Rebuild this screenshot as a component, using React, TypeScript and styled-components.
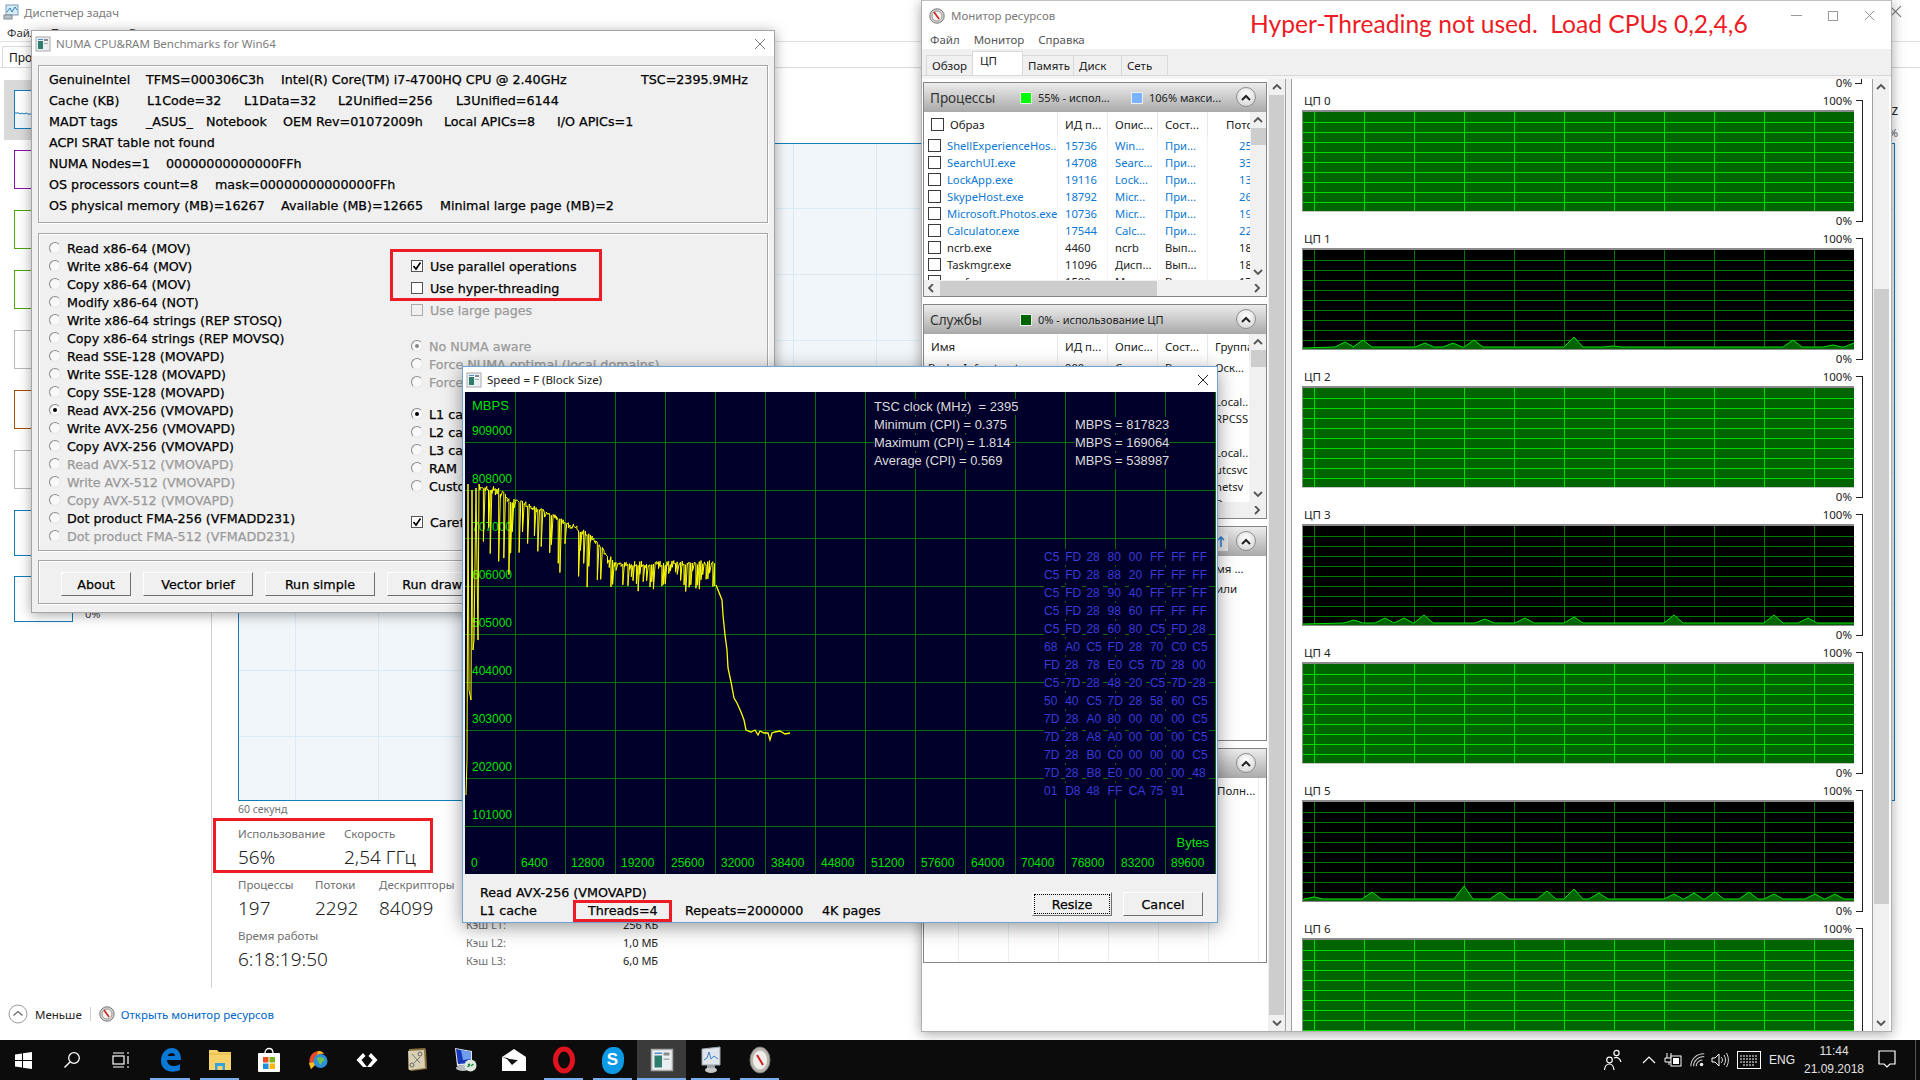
import React from "react";
import styled, { createGlobalStyle } from "styled-components";

const UI = `"Noto Sans", "Open Sans", Arial, sans-serif`;
const OLD = `"DejaVu Sans", "Liberation Sans", sans-serif`;
const NARROW = `"Liberation Sans", Arial, sans-serif`;

const Global = createGlobalStyle`
  html, body { margin: 0; padding: 0; background: #fff; overflow: hidden; }
  * { box-sizing: border-box; }
`;

const Desktop = styled.div`
  position: relative; width: 1920px; height: 1080px; overflow: hidden; background: #fff; font-family: ${UI};
`;

/* ---------- windows ---------- */
const Win = styled.div<{ $x: number; $y: number; $w: number; $h: number }>`
  position: absolute; left: ${(p) => p.$x}px; top: ${(p) => p.$y}px; width: ${(p) => p.$w}px; height: ${(p) => p.$h}px;
  display: flex; flex-direction: column; overflow: hidden;
`;
const RedBox = styled.div<{ $x: number; $y: number; $w: number; $h: number }>`
  position: absolute; left: ${(p) => p.$x}px; top: ${(p) => p.$y}px; width: ${(p) => p.$w}px; height: ${(p) => p.$h}px;
  border: 3px solid #ed1c24; pointer-events: none;
`;
const Headline = styled.div`
  position: absolute; left: 1250px; top: 7px; font: 400 24.6px/34px Lato, sans-serif; color: #ed1c24; white-space: pre;
`;

/* ---------- task manager ---------- */
const TmWin = styled(Win)` background: #fff; `;
const TmTitle = styled.div`
  height: 24px; display: flex; align-items: center; gap: 5px; padding-left: 3px; font-size: 11.5px; color: #7a7a7a; flex: none; position: relative;
`;
const TmClose = styled.div` margin-left: auto; margin-right: 18px; color: #777; font-size: 16px; line-height: 16px; `;
const TmMenu = styled.div`
  height: 18px; flex: none; display: flex; gap: 14px; padding-left: 7px; font-size: 11.5px; color: #333; border-bottom: 1px solid #e0e0e0; align-items: center;
`;
const TmTabs = styled.div`
  height: 26px; flex: none; padding: 0 0 0 2px; font-size: 12px; color: #111; border-bottom: 1px solid #d9d9d9; display: flex; align-items: flex-end;
`;
const TmTab = styled.div`
  height: 21px; padding: 0 9px 0 6px; line-height: 21px; border: 1px solid #d9d9d9; border-bottom: 0; background: #fff;
`;
const TmBody = styled.div` flex: 1; display: flex; min-height: 0; `;
const TmLeft = styled.div` width: 212px; flex: none; padding-top: 12px; border-right: 1px solid #d0d0d0; `;
const Thumb = styled.div<{ $sel?: boolean; $gap?: number }>`
  margin-left: 4px; padding: 10px 0 ${(p) => p.$gap ?? 11}px 10px;
  background: ${(p) => (p.$sel ? "#d9d9d9" : "transparent")}; display: flex; gap: 12px; align-items: flex-end;
`;
const ThumbBox = styled.div<{ $c: string; $tall?: boolean }>`
  width: 59px; height: ${(p) => (p.$tall ? 46 : 39)}px; border: 1px solid ${(p) => p.$c}; background: #fff; flex: none; display: flex; flex-direction: column; justify-content: flex-end;
`;
const ThumbPct = styled.div` font-size: 11px; line-height: 12px; color: #444; transform: translateY(-2px); `;
const TmRight = styled.div` flex: 1; padding: 0 25px 0 26px; min-width: 0; display: flex; flex-direction: column; `;
const TmHead = styled.div` height: 75px; flex: none; margin-right: -3px; display: flex; flex-direction: column; justify-content: flex-end; align-items: flex-end; font-size: 11.5px; line-height: 14px; color: #555; gap: 9px; padding-bottom: 3px; `;
const TmHeadCpu = styled.div` font-size: 14px; color: #222; `;
const BigChart = styled.div`
  height: 658px; flex: none; border: 1px solid #117dbb; background-color: #f1f6fa;
  background-image: linear-gradient(to right, #d9eaf4 1px, transparent 1px), linear-gradient(to bottom, #d9eaf4 1px, transparent 1px);
  background-size: 83px 66px; background-position: 56px 64px;
`;
const Caption = styled.div` font-size: 10.5px; line-height: 17px; color: #707070; height: 18px; margin-bottom: 7px; `;
const StatsRow = styled.div` display: flex; align-items: flex-end; `;
const StatsLeft = styled.div` width: 228px; display: flex; flex-direction: column; gap: 5px; flex: none; `;
const StatLine = styled.div` display: flex; `;
const Stat = styled.div<{ $w: number }>` width: ${(p) => p.$w}px; flex: none; `;
const StatLabel = styled.div` font-size: 11.5px; line-height: 16px; color: #707070; white-space: nowrap; `;
const StatValue = styled.div` font-size: 19px; font-weight: 300; line-height: 30px; color: #222; white-space: nowrap; `;
const CacheBlock = styled.div` padding-bottom: 5px; `;
const CacheRow = styled.div` display: flex; height: 18px; align-items: center; font-size: 11px; `;
const CacheKey = styled.div` width: 157px; color: #707070; `;
const CacheVal = styled.div` color: #222; `;
const TmFoot = styled.div` height: 52px; flex: none; display: flex; align-items: center; padding-left: 8px; font-size: 11.5px; color: #222; `;
const FootLess = styled.span` margin-left: 7px; `;
const FootSep = styled.div` width: 1px; height: 14px; background: #cfcfcf; margin: 0 8px; `;
const FootLink = styled.span` margin-left: 6px; color: #0066cc; `;

/* ---------- NUMA window ---------- */
const NumaWin = styled(Win)` background: #f0f0f0; border: 1px solid #a5a5a5; box-shadow: 0 2px 12px rgba(0,0,0,.35); font-family: ${OLD}; font-size: 12.7px; color: #000; -webkit-text-stroke: 0.25px; `;
const WinTitle = styled.div`
  height: 25px; flex: none; background: #fff; display: flex; align-items: center; padding-left: 3px; gap: 5px; font: 400 11.5px ${UI}; color: #7d7d7d; -webkit-text-stroke: 0;
`;
const WinTitleDark = styled(WinTitle)` color: #222; `;
const WinX = styled.div` margin-left: auto; margin-right: 6px; width: 16px; height: 16px; display: flex; align-items: center; justify-content: center; `;
const Group = styled.div<{ $h: number; $mt: number }>`
  height: ${(p) => p.$h}px; margin: ${(p) => p.$mt}px 6px 0; border: 1px solid #a8a8a8; box-shadow: inset 1px 1px 0 #fff, 1px 1px 0 #fff; flex: none;
`;
const InfoBox = styled(Group)` padding: 3px 0 0 10px; `;
const InfoLine = styled.div` height: 21px; display: flex; align-items: center; white-space: pre; `;
const Cell = styled.span<{ $w?: number }>` ${(p) => (p.$w ? `width:${p.$w}px;flex:none;` : "")} `;
const OptionsBox = styled(Group)` padding: 5px 0 0 10px; display: flex; `;
const OptLeft = styled.div` width: 362px; flex: none; `;
const OptRow = styled.div<{ $off?: boolean; $h?: number; $mt?: number }>`
  height: ${(p) => p.$h ?? 18}px; margin-top: ${(p) => p.$mt ?? 0}px; display: flex; align-items: center; gap: 6px; white-space: nowrap; color: ${(p) => (p.$off ? "#9a9a9a" : "#000")};
`;
const OptRight = styled.div` padding: 18px 0 0 0; margin-top: -2px; `;
const Radio = styled.span<{ $on?: boolean; $off?: boolean }>`
  width: 12px; height: 12px; flex: none; border-radius: 50%; border: 1px solid; border-color: #8a8a8a #e6e6e6 #e6e6e6 #8a8a8a; background: #f8f8f8; display: flex; align-items: center; justify-content: center;
  &::after { content: ""; width: 4px; height: 4px; border-radius: 50%; background: ${(p) => (p.$on ? (p.$off ? "#888" : "#000") : "transparent")}; }
`;
const Check = styled.span<{ $off?: boolean }>`
  width: 12px; height: 12px; flex: none; border: 1px solid ${(p) => (p.$off ? "#aaa" : "#555")}; background: ${(p) => (p.$off ? "#f0f0f0" : "#fff")}; display: flex; margin-right: 1px;
`;
const ButtonsBox = styled(Group)` padding: 11px 0 0 22px; display: flex; gap: 12px; `;
const OldButton = styled.div<{ $w: number; $focus?: boolean }>`
  width: ${(p) => p.$w}px; height: 24px; flex: none; display: flex; align-items: center; justify-content: center; background: #f0f0f0; color: #000;
  border: 1px solid; border-color: #fff #6e6e6e #6e6e6e #fff; white-space: nowrap;
  outline: ${(p) => (p.$focus ? "1px dotted #000" : "none")}; outline-offset: -3px;
`;

/* ---------- Speed window ---------- */
const SpeedWin = styled(Win)` background: #f0f0f0; border: 1px solid #6ea3d4; box-shadow: 0 4px 18px rgba(0,0,0,.4); font-family: ${OLD}; font-size: 12.7px; -webkit-text-stroke: 0.25px; `;
const Canvas = styled.div`
  position: relative; width: 751px; height: 482px; margin-left: 2px; flex: none; background: #00002a; overflow: hidden; font-family: ${NARROW}; font-size: 12px; line-height: 16px; -webkit-text-stroke: 0;
`;
const Layer = styled.svg` position: absolute; left: 0; top: 0; display: block; `;
const AxisY = styled.div` position: absolute; left: 7px; top: 6px; color: #00e000; display: flex; flex-direction: column; `;
const AxisMbps = styled.div` height: 16px; margin-bottom: -7px; font-size: 13px; `;
const AxisYRow = styled.div` height: 48px; padding-top: 16px; `;
const AxisX = styled.div` position: absolute; left: 0; bottom: 3px; display: grid; grid-template-columns: repeat(15, 50px); color: #00e000; `;
const AxisXCell = styled.div` padding-left: 6px; `;
const Bytes = styled.div` position: absolute; right: 7px; top: 443px; color: #00e000; font-size: 13px; `;
const StatsText = styled.div<{ $x: number; $y: number }>`
  position: absolute; left: ${(p) => p.$x}px; top: ${(p) => p.$y}px; color: #dcdcdc; display: flex; flex-direction: column; gap: 2px; white-space: pre; align-items: flex-start;
`;
const StatsLine = styled.div` background: #00002a; font-size: 12.9px; `;
const Hex = styled.div` position: absolute; left: 579px; top: 157px; display: flex; flex-direction: column; gap: 2px; color: #3a3ad8; `;
const HexRow = styled.div` display: grid; grid-template-columns: repeat(8, 21.2px); `;
const HexCell = styled.span` background: #00002a; width: 17px; height: 16px; `;
const SpeedFoot = styled.div` flex: 1; display: flex; padding: 9px 14px 0 17px; `;
const SpeedInfo = styled.div` display: flex; flex-direction: column; `;
const SpeedLine = styled.div` display: flex; height: 18px; align-items: center; white-space: nowrap; `;
const SpeedBtns = styled.div` margin-left: auto; margin-top: 9px; display: flex; gap: 11px; `;

/* ---------- Resource monitor ---------- */
const ResWin = styled(Win)` background: #fff; border: 1px solid #b0b0b0; border-top: 1px solid #c0c0c0; box-shadow: 0 2px 12px rgba(0,0,0,.35); `;
const ResTitle = styled.div` height: 29px; flex: none; display: flex; align-items: center; gap: 6px; padding-left: 7px; font-size: 11.5px; color: #7a7a7a; `;
const Ctrls = styled.div` margin-left: auto; display: flex; align-items: center; gap: 26px; padding-right: 16px; `;
const ResMenu = styled.div` height: 19px; flex: none; display: flex; gap: 14px; padding-left: 8px; font-size: 11.5px; color: #555; align-items: center; `;
const ResTabs = styled.div` height: 27px; flex: none; background: #f0f0f0; display: flex; align-items: flex-end; padding-left: 4px; border-bottom: 1px solid #d8d8d8; `;
const ResTab = styled.div<{ $w: number; $on?: boolean }>`
  width: ${(p) => p.$w}px; height: ${(p) => (p.$on ? 24 : 20)}px; flex: none; background: ${(p) => (p.$on ? "#fff" : "#f0f0f0")}; border: 1px solid #d9d9d9; border-bottom: 0;
  margin-right: -1px; font-size: 11.5px; color: #222; display: flex; align-items: ${(p) => (p.$on ? "flex-start" : "center")}; padding-left: ${(p) => (p.$on ? 7 : 5)}px; line-height: 18px;
`;
const ResBody = styled.div` flex: 1; display: flex; min-height: 0; border-top: 3px solid #f4f4f4; `;
const ResLeft = styled.div` width: 347px; flex: none; padding: 3px 0 0 1px; display: flex; flex-direction: column; gap: 7px; `;
const Panel = styled.div` width: 344px; height: 215px; border: 1px solid #858585; flex: none; display: flex; flex-direction: column; background: #fff; overflow: hidden; `;
const PanelHead = styled.div`
  height: 29px; flex: none; display: flex; align-items: center; padding-left: 6px; background: linear-gradient(#ececec, #a9a9a9); position: relative; font-size: 12px; color: #222; white-space: nowrap;
`;
const PanelName = styled.div` width: 90px; flex: none; font-size: 13.5px; color: #333; `;
const Meter = styled.span<{ $c: string }>` width: 12px; height: 12px; flex: none; border: 1px solid #eee; background: ${(p) => p.$c}; margin-right: 6px; `;
const MeterText = styled.span<{ $w?: number }>` ${(p) => (p.$w ? `width:${p.$w}px;flex:none;` : "")} font-size: 11px; `;
const Collapse = styled.div`
  position: absolute; right: 10px; top: 4px; width: 20px; height: 20px; border-radius: 50%; border: 1px solid #8d8d8d; background: radial-gradient(circle at 50% 35%, #fff, #cfcfcf); display: flex; align-items: center; justify-content: center;
`;
const HeadAction = styled.div` margin-left: auto; margin-right: 38px; width: 22px; height: 18px; background: #e6e6e6; display: flex; align-items: center; justify-content: flex-end; padding-right: 3px; `;
const PanelTable = styled.div` flex: 1; display: flex; min-height: 0; `;
const TableMain = styled.div` width: 326px; flex: none; overflow: hidden; `;
const TableGrid = styled.div` display: grid; grid-template-columns: 134px 50px 50px 50px 42px; font-size: 11.2px; line-height: 17px; white-space: nowrap; color: #222; `;
const HeadRow = styled(TableGrid)` height: 25px; align-items: center; font-size: 11.5px; `;
const HeadCell = styled.div<{ $r?: boolean }>` padding-left: 7px; height: 25px; line-height: 25px; border-right: 1px solid #e8e8e8; overflow: hidden; display: flex; align-items: center; gap: 6px; ${(p) => (p.$r ? "padding-left:18px;border:0;" : "")} `;
const BodyCell = styled.div<{ $blue?: boolean; $r?: boolean }>` height: 17px; padding-left: 7px; color: ${(p) => (p.$blue ? "#0a78d4" : "#222")}; overflow: hidden; border-right: 1px solid #f4f4f4; display: flex; align-items: center; gap: 6px; ${(p) => (p.$r ? "padding-left:31px;border:0;" : "")} `;
const NameCell = styled(BodyCell)` padding-left: 4px; `;
const Box12 = styled.span` width: 13px; height: 13px; border: 1px solid #3a3a3a; flex: none; background: #fff; `;
const Rows = styled.div<{ $h: number }>` height: ${(p) => p.$h}px; overflow: hidden; `;
const VBar = styled.div` width: 16px; flex: none; background: #f0f0f0; display: flex; flex-direction: column; align-items: center; `;
const ThumbV = styled.div<{ $h: number; $mt?: number }>` width: 15px; height: ${(p) => p.$h}px; background: #cdcdcd; margin-top: ${(p) => p.$mt ?? 0}px; `;
const Arrow = styled.div` height: 16px; flex: none; display: flex; align-items: center; justify-content: center; width: 16px; `;
const Spacer = styled.div` flex: 1; `;
const HBar = styled.div` height: 16px; flex: none; background: #f0f0f0; display: flex; align-items: center; `;
const ThumbH = styled.div` width: 217px; height: 15px; background: #cdcdcd; `;
const LowerGrid = styled.div` flex: 1; display: flex; padding-left: 276px; font-size: 11.5px; color: #222; overflow: hidden; position: relative; white-space: nowrap; `;
const LowerCol = styled.div` flex: 1; padding-top: 4px; display: flex; flex-direction: column; gap: 3px; line-height: 17px; padding-left: 16px; `;
const FaintLines = styled.div`
  flex: 1; align-self: stretch; background-image: linear-gradient(to right, #e6eef4 1px, transparent 1px); background-size: 50px 100%; background-position: 134px 0;
`;
const LowerFour = styled.div` flex: 1; display: flex; flex-direction: column; font-size: 11.5px; color: #222; white-space: nowrap; line-height: 17px; padding-left: 293px; background-image: linear-gradient(to right, #e6eef4 1px, transparent 1px); background-size: 50px 100%; background-position: 134px 0; padding-top: 4px; gap: 5px; `;
const DriveLetter = styled.div` margin-left: -9px; `;
const MidBar = styled(VBar)` width: 17px; height: 100%; background: #f0f0f0; margin-left: -1px; `;
const ThumbTall = styled.div` width: 15px; flex: 1; background: #cdcdcd; `;
const Gutter = styled.div` width: 6px; flex: none; background: #f0f0f0; border-left: 1px solid #a0a0a0; `;
const ResRight = styled.div` width: 582px; flex: none; border-left: 1px solid #a0a0a0; border-right: 1px solid #a0a0a0; padding-left: 10px; overflow: hidden; background: #fff; `;
const Tail = styled.div` height: 11px; display: flex; position: relative; `;
const TailText = styled.div` width: 550px; text-align: right; font-size: 11.5px; line-height: 14px; color: #222; margin-top: -3px; `;
const TailTick = styled.div` width: 7px; height: 5px; margin-left: 3px; border-bottom: 1px solid #222; border-right: 1px solid #222; `;
const CpuBlock = styled.div` display: grid; grid-template-columns: 552px 12px; grid-template-rows: 20px 102px 16px; `;
const CpuHead = styled.div` display: flex; justify-content: space-between; align-items: center; font-size: 11.5px; color: #222; padding: 2px 2px 0 2px; height: 20px; line-height: 14px; `;
const CpuFoot = styled.div` text-align: right; font-size: 11.5px; line-height: 14px; height: 16px; padding: 2px 2px 0 0; color: #222; `;
const Bracket = styled.div` grid-column: 2; grid-row: 1 / 4; margin: 10px 0 0 2px; height: 122px; width: 7px; border: 1px solid #222; border-left: 0; `;
const CpuSvg = styled.svg` display: block; grid-column: 1; `;

/* ---------- taskbar ---------- */
const Taskbar = styled.div`
  position: absolute; left: 0; top: 1040px; width: 1920px; height: 40px; background: #0c0c0c; display: flex; align-items: stretch;
`;
const TbIcons = styled.div` display: flex; `;
const TbSlot = styled.div<{ $w: number; $on?: boolean; $run?: boolean }>`
  width: ${(p) => p.$w}px; flex: none; position: relative; display: flex; align-items: center; justify-content: center; background: ${(p) => (p.$on ? "#3b3b3b" : "transparent")};
  ${(p) => (p.$run ? `&::after{content:"";position:absolute;left:${p.$on ? 0 : 5}px;right:${p.$on ? 0 : 5}px;bottom:0;height:2px;background:#76aef0;}` : "")}
`;
const Tray = styled.div` margin-left: auto; display: flex; align-items: center; color: #fff; `;
const TrayIcon = styled.div<{ $w: number }>` width: ${(p) => p.$w}px; flex: none; display: flex; justify-content: center; align-items: center; `;
const TrayLang = styled.div` width: 36px; flex: none; text-align: center; font: 400 12px ${NARROW}; color: #e8e8e8; `;
const Clock = styled.div` width: 68px; flex: none; text-align: center; font: 400 12px/18px ${NARROW}; color: #e0e0e0; `;
const DeskEdge = styled.div` width: 5px; height: 100%; border-left: 1px solid #555; flex: none; margin-left: 9px; `;

/* ---------- icons ---------- */
const XIcon = ({ c = "#777", s = 12 }: { c?: string; s?: number }) => (
  <svg width={s} height={s} viewBox="0 0 12 12"><path d="M1 1 L11 11 M11 1 L1 11" stroke={c} strokeWidth="1" fill="none" /></svg>
);
const Chev = ({ dir }: { dir: "u" | "d" | "l" | "r" }) => {
  const d = { u: "M1 6 L5 2 L9 6", d: "M1 2 L5 6 L9 2", l: "M6 0 L2 4 L6 8", r: "M2 0 L6 4 L2 8" }[dir];
  return <svg width="10" height="9" viewBox="0 0 10 9"><path d={d} stroke="#555" strokeWidth="1.8" fill="none" /></svg>;
};
const ChevBold = () => <svg width="12" height="9" viewBox="0 0 12 9"><path d="M2 7 L6 3 L10 7" stroke="#222" strokeWidth="2" fill="none" /></svg>;
const Tick = () => <svg width="10" height="10" viewBox="0 0 10 10"><path d="M1.5 5 L4 8 L8.5 1.5" stroke="#000" strokeWidth="1.7" fill="none" /></svg>;
const UpBlue = () => <svg width="8" height="12" viewBox="0 0 8 12"><path d="M4 1 V11 M1 4 L4 1 L7 4" stroke="#2a7fd0" strokeWidth="1.5" fill="none" /></svg>;
const NumaIcon = ({ s = 16 }: { s?: number }) => (
  <svg width={s} height={s} viewBox="0 0 16 16"><rect x="1" y="1" width="14" height="14" fill="#eceff2" stroke="#a8a8a8" /><rect x="3" y="5" width="5" height="8" fill="#2f7d6e" /><rect x="9" y="3" width="4" height="2" fill="#888" /><rect x="9" y="7" width="4" height="1" fill="#aaa" /><rect x="3" y="3" width="5" height="1" fill="#4a8fd0" /></svg>
);
const CompassIcon = ({ s = 16 }: { s?: number }) => (
  <svg width={s} height={s} viewBox="0 0 16 16"><circle cx="8" cy="8" r="7.2" fill="#d8d4d0" stroke="#777" /><circle cx="8" cy="8" r="5" fill="#f6f4f0" stroke="#999" /><path d="M5 4 L10 11" stroke="#d02020" strokeWidth="1.6" /></svg>
);
const TmIcon = () => (
  <svg width="16" height="16" viewBox="0 0 16 16"><rect x="3" y="1" width="12" height="10" fill="#d8ecf8" stroke="#7a9ab8" /><path d="M4 8 L7 4 L9 8 L12 3 L14 6" stroke="#2a80b8" fill="none" /><rect x="1" y="11" width="8" height="4" fill="#b8c0c8" stroke="#808890" /></svg>
);
const CpuThumbLine = () => <svg width="57" height="19" viewBox="0 0 57 19"><rect y="5" width="57" height="14" fill="#f1f6fa" /><path d="M0 4 H4 L5 5 L7 4 L9 5 L11 4 L13 5 H57" stroke="#117dbb" fill="none" /></svg>;
const WinLogo = () => <svg width="17" height="17" viewBox="0 0 17 17"><path fill="#fff" d="M0 2.4 L7 1.4 V8 H0 Z M8 1.2 L17 0 V8 H8 Z M0 9 H7 V15.6 L0 14.6 Z M8 9 H17 V17 L8 15.8 Z" /></svg>;
const SearchI = () => <svg width="18" height="18" viewBox="0 0 18 18"><circle cx="11" cy="7" r="5.3" stroke="#fff" strokeWidth="1.3" fill="none" /><path d="M7 11 L1.5 16.5" stroke="#fff" strokeWidth="1.5" /></svg>;
const TaskV = () => <svg width="18" height="18" viewBox="0 0 18 18"><g stroke="#fff" strokeWidth="1.2" fill="none"><rect x="1" y="5" width="11" height="8" /><path d="M1 2 H12 M1 16 H12 M15 2 H17 M15 16 H17 M16 5 V13" /></g></svg>;
const EdgeI = () => <svg width="24" height="26" viewBox="0 0 24 26"><path d="M3 14 C3 5 9 1 14 1 C20 1 23 6 23 13 L9 13 C9 19 17 21 22 17 L22 23 C14 27 3 24 3 14 Z M9.5 9 H17 C17 5 11 5 9.5 9 Z" fill="#0a78d7" fillRule="evenodd" /></svg>;
const FolderI = () => <svg width="24" height="24" viewBox="0 0 24 24"><path d="M1 2 H9 L11 4 H23 V22 H1 Z" fill="#f5d26a" /><path d="M1 6 H23" stroke="#e3b341" /><path d="M7 15 H17 V22 H14.5 V18 H9.5 V22 H7 Z" fill="#35a2e0" /></svg>;
const StoreI = () => <svg width="24" height="26" viewBox="0 0 24 26"><path d="M8 6 C8 0 16 0 16 6" stroke="#fff" strokeWidth="1.3" fill="none" /><rect x="1" y="6" width="22" height="19" fill="#fff" rx="1" /><rect x="6" y="10" width="5.5" height="5.5" fill="#e8501f" /><rect x="12.5" y="10" width="5.5" height="5.5" fill="#7cb518" /><rect x="6" y="16.5" width="5.5" height="5.5" fill="#1e90e0" /><rect x="12.5" y="16.5" width="5.5" height="5.5" fill="#fbb80f" /></svg>;
const WheelI = () => (
  <svg width="20" height="20" viewBox="0 0 20 20">
    <path d="M2 15 C0 9 3 2 10 1 C13 1 15 2 16 4 C11 3 7 6 7 12 L9 13 L3 19 L1 13 Z" fill="#e84a2a" />
    <path d="M10 1 C13 1 15 2 16 4 C13 3 11 4 9 6 Z" fill="#f6c21a" />
    <path d="M1 13 L3 19 L9 13 L7 12 Z" fill="#f2c21a" />
    <circle cx="12.5" cy="11" r="7" fill="#2f8fd8" />
    <path d="M9 8 C12 6 16 7 17 11 C14 10 14 14 12 15 C11 12 9 11 9 8 Z" fill="#6cc24a" />
  </svg>
);
const DiamondI = () => <svg width="24" height="16" viewBox="0 0 24 16"><path d="M8 1 L1.5 8 L8 15 H12 L6.5 8 L10.5 4 Z M16 1 L22.5 8 L16 15 H12 L17.5 8 L13.5 4 Z" fill="#fff" /></svg>;
const MapI = () => (
  <svg width="22" height="24" viewBox="0 0 22 24">
    <path d="M4 1 L20 0 L21 2 L22 21 L6 23 L3 21 Z" fill="#8a7440" />
    <path d="M3 3 L19 2 L20 20 L4 22 Z" fill="#d9d0b4" />
    <circle cx="15" cy="6" r="2" fill="none" stroke="#666" /><circle cx="7" cy="17" r="2" fill="none" stroke="#666" />
    <path d="M7 6 L15 15 M15 9 L9 15" stroke="#777" />
  </svg>
);
const NetI = () => (
  <svg width="24" height="26" viewBox="0 0 24 26">
    <path d="M2 1 L19 4 L19 17 L4 19 Z" fill="#dfe4ea" />
    <path d="M3 2 L18 5 L18 16 L5 17 Z" fill="#1538b8" /><path d="M8 3 L18 5 L18 12 L10 13 Z" fill="#6f9df0" />
    <ellipse cx="10" cy="21" rx="7" ry="3" fill="#b8bcc0" />
    <circle cx="17.5" cy="18.5" r="6" fill="#dfe9df" /><path d="M14.5 20 L17 18 M18 19 L20.5 17 M15 18 L17 17" stroke="#188a38" strokeWidth="1.4" />
  </svg>
);
const MailI = () => <svg width="24" height="24" viewBox="0 0 24 24"><path d="M0 9 L12 1 L24 9 V23 H0 Z" fill="#fff" /><path d="M0 9 L16 12 L10 17 L5 11 Z" fill="#111" /><path d="M5 9 L19 9 L18 12 L7 11 Z" fill="#fff" /></svg>;
const OperaI = () => <svg width="22" height="28" viewBox="0 0 22 28"><ellipse cx="11" cy="14" rx="8.5" ry="11" stroke="#e0131f" strokeWidth="5" fill="none" /></svg>;
const SkypeText = styled.span` font: 700 17px/24px ${NARROW}; color: #fff; `;
const SkypeBg = styled.div` width: 22px; height: 27px; border-radius: 50% 40% 50% 40%; background: #0d9be6; display: flex; align-items: center; justify-content: center; `;
const PerfI = () => <svg width="24" height="28" viewBox="0 0 24 28"><path d="M3 3 L21 1 V19 L3 19 Z" fill="#dfe5ea" stroke="#9aa4ac" /><path d="M5 14 L8 12 L10 6 L12 13 L15 10 L19 13" stroke="#3a80d0" fill="none" /><ellipse cx="12" cy="24" rx="6" ry="3" fill="#c8c8c8" /><rect x="8" y="19" width="8" height="3" fill="#a0a0a0" /></svg>;
const ResI = () => <svg width="22" height="28" viewBox="0 0 22 28"><ellipse cx="11" cy="14" rx="10" ry="13" fill="#b8b4ae" stroke="#7a7a7a" /><ellipse cx="11" cy="14" rx="7" ry="9.5" fill="#f0eeea" /><path d="M8 9 L14 19" stroke="#d02020" strokeWidth="2" /></svg>;
const PeopleI = () => <svg width="20" height="24" viewBox="0 0 20 24"><g stroke="#fff" strokeWidth="1.2" fill="none"><circle cx="6.5" cy="12" r="2.8" /><path d="M1.5 22 C2 17 5 16 6.5 16 C9 16 10.5 18 11 22" /><circle cx="13.5" cy="5" r="2.6" /><path d="M11 10 C14 8.5 17 10 18 14" /></g></svg>;
const CaretI = () => <svg width="14" height="10" viewBox="0 0 14 10"><path d="M1 8 L7 2 L13 8" stroke="#fff" strokeWidth="1.2" fill="none" /></svg>;
const BattI = () => <svg width="18" height="18" viewBox="0 0 18 18"><path d="M3 2 V7 M7 2 V7 M1 7 H9 V11 H1 Z M5 11 V14" stroke="#fff" fill="none" /><rect x="7" y="5" width="10" height="10" fill="#000" stroke="#fff" /><rect x="9" y="7" width="6" height="6" fill="#fff" /></svg>;
const WifiI = () => <svg width="16" height="18" viewBox="0 0 18 18"><g stroke="#ccc" strokeWidth="1.2" fill="none"><path d="M1 16 C1 8 7 2 16 2" /><path d="M4 16 C4 10 9 5 16 5" /><path d="M7 16 C7 12 10 9 14 9" /></g><circle cx="13" cy="14" r="2" fill="#eee" /></svg>;
const VolI = () => <svg width="18" height="18" viewBox="0 0 18 18"><path d="M1 7 H4 L8 3 V15 L4 11 H1 Z" stroke="#fff" fill="none" /><path d="M10 6 C12 8 12 10 10 12 M13 4 C15 7 15 11 13 14 M15.5 2 C18 7 18 11 15.5 16" stroke="#ddd" fill="none" /></svg>;
const KbdI = () => <svg width="24" height="18" viewBox="0 0 24 18"><rect x="0.5" y="0.5" width="23" height="17" stroke="#fff" fill="none" /><path d="M3 5 H21 M3 8 H21 M3 11 H21 M6 14 H18" stroke="#fff" strokeDasharray="2 1" /></svg>;
const NotifI = () => <svg width="18" height="20" viewBox="0 0 18 20"><path d="M1 1 H17 V14 H12 L9 17 L6 14 H1 Z" stroke="#fff" strokeWidth="1.2" fill="none" /></svg>;
const LessI = () => <svg width="20" height="20" viewBox="0 0 20 20"><circle cx="10" cy="10" r="9" stroke="#9a9a9a" fill="#fff" /><path d="M5.5 11.5 L10 7.5 L14.5 11.5" stroke="#666" strokeWidth="1.2" fill="none" /></svg>;

/* ---------- data ---------- */
const infoLines: [string, number?][][] = [
  [["GenuineIntel", 97], ["TFMS=000306C3h", 135], ["Intel(R) Core(TM) i7-4700HQ CPU @ 2.40GHz", 360], ["TSC=2395.9MHz"]],
  [["Cache (KB)", 98], ["L1Code=32", 97], ["L1Data=32", 94], ["L2Unified=256", 118], ["L3Unified=6144"]],
  [["MADT tags", 97], ["_ASUS_", 60], ["Notebook", 77], ["OEM Rev=01072009h", 161], ["Local APICs=8", 113], ["I/O APICs=1"]],
  [["ACPI SRAT table not found"]],
  [["NUMA Nodes=1", 117], ["00000000000000FFh"]],
  [["OS processors count=8", 166], ["mask=00000000000000FFh"]],
  [["OS physical memory (MB)=16267", 232], ["Available (MB)=12665", 159], ["Minimal large page (MB)=2"]],
];
const radios: [string, boolean?, boolean?][] = [
  ["Read x86-64 (MOV)"], ["Write x86-64 (MOV)"], ["Copy x86-64 (MOV)"], ["Modify x86-64 (NOT)"],
  ["Write x86-64 strings (REP STOSQ)"], ["Copy x86-64 strings (REP MOVSQ)"], ["Read SSE-128 (MOVAPD)"], ["Write SSE-128 (MOVAPD)"],
  ["Copy SSE-128 (MOVAPD)"], ["Read AVX-256 (VMOVAPD)", true], ["Write AVX-256 (VMOVAPD)"], ["Copy AVX-256 (VMOVAPD)"],
  ["Read AVX-512 (VMOVAPD)", false, true], ["Write AVX-512 (VMOVAPD)", false, true], ["Copy AVX-512 (VMOVAPD)", false, true],
  ["Dot product FMA-256 (VFMADD231)"], ["Dot product FMA-512 (VFMADD231)", false, true],
];
const hexRows = [
  "C5 FD 28 80 00 FF FF FF", "C5 FD 28 88 20 FF FF FF", "C5 FD 28 90 40 FF FF FF", "C5 FD 28 98 60 FF FF FF",
  "C5 FD 28 60 80 C5 FD 28", "68 A0 C5 FD 28 70 C0 C5", "FD 28 78 E0 C5 7D 28 00", "C5 7D 28 48 20 C5 7D 28",
  "50 40 C5 7D 28 58 60 C5", "7D 28 A0 80 00 00 00 C5", "7D 28 A8 A0 00 00 00 C5", "7D 28 B0 C0 00 00 00 C5",
  "7D 28 B8 E0 00 00 00 48", "01 D8 48 FF CA 75 91",
];
const procs = [
  ["ShellExperienceHos...", "15736", "Win...", "При...", "25", 1], ["SearchUI.exe", "14708", "Searc...", "При...", "33", 1],
  ["LockApp.exe", "19116", "Lock...", "При...", "13", 1], ["SkypeHost.exe", "18792", "Micr...", "При...", "26", 1],
  ["Microsoft.Photos.exe", "10736", "Micr...", "При...", "19", 1], ["Calculator.exe", "17544", "Calc...", "При...", "22", 1],
  ["ncrb.exe", "4460", "ncrb", "Вып...", "18", 0], ["Taskmgr.exe", "11096", "Дисп...", "Вып...", "18", 0],
  ["perfmon.exe", "1500", "Мон...", "Вып...", "17", 0],
] as const;

type Pk = [number, number];
const peaks: Record<number, Pk[]> = {
  1: [[43, 6], [61, 8], [123, 5], [151, 5], [172, 8], [272, 11], [311, 2], [491, 8], [531, 3], [552, 5]],
  3: [[52, 4], [83, 6], [102, 6], [122, 9], [183, 5], [223, 6], [272, 7], [372, 9], [472, 9], [506, 6]],
  5: [[12, 3], [70, 8], [162, 14], [198, 8], [245, 9], [272, 11], [297, 7], [372, 6], [392, 7], [413, 8], [447, 8], [472, 6], [513, 6], [533, 6]],
};
const idleLine = (pk: Pk[]) => {
  const pts: string[] = ["1,100"];
  pk.forEach(([x, h]) => { pts.push(`${x - 10},99`, `${x},${100 - h}`, `${x + 9},99`); });
  pts.push("552,99");
  return pts.join(" ");
};

const CpuChart = ({ i }: { i: number }) => {
  const loaded = i % 2 === 0;
  const line = idleLine(peaks[i] ?? []);
  return (
    <CpuSvg width={552} height={102} viewBox="0 0 552 102" shapeRendering="crispEdges">
      <rect width="552" height="102" fill={loaded ? "#006400" : "#000"} />
      {Array.from({ length: 11 }, (_, k) => <rect key={k} x={12 + 50 * k} y={0} width="1" height="102" fill={loaded ? "#00dc00" : "#007a00"} />)}
      {Array.from({ length: 9 }, (_, k) => <rect key={k} x={0} y={12 + 10 * k} width="552" height="1" fill={loaded ? "#00dc00" : "#007a00"} />)}
      {!loaded && <polyline points={`${line} 552,101 1,101`} fill="#006400" stroke="none" shapeRendering="auto" />}
      {!loaded && <polyline points={line} fill="none" stroke="#00e000" strokeWidth="1" shapeRendering="auto" />}
      <rect width="552" height="2" fill="#8a8a8a" /><rect width="1" height="102" fill="#8a8a8a" /><rect y="101" width="552" height="1" fill={loaded ? "#c8c8c8" : "#8a8a8a"} />
    </CpuSvg>
  );
};

/* mulberry32: a small seeded generator, so the noisy curve is stable between renders */
const rng = (() => {
  let a = 0x9e3779b9;
  return () => {
    a = (a + 0x6d2b79f5) | 0;
    let t = Math.imul(a ^ (a >>> 15), 1 | a);
    t = (t + Math.imul(t ^ (t >>> 7), 61 | t)) ^ t;
    return ((t ^ (t >>> 14)) >>> 0) / 4294967296;
  };
})();
const env: [number, number][] = [[466, 488], [495, 485], [510, 497], [530, 503], [545, 510], [570, 522], [590, 533], [610, 556], [620, 561], [716, 560]];
const envAt = (x: number) => {
  for (let k = 0; k < env.length - 1; k++) {
    const [a, b] = env[k], [c, d] = env[k + 1];
    if (x >= a && x <= c) return b + ((d - b) * (x - a)) / (c - a);
  }
  return 560;
};
const yellowPts = (() => {
  const p: [number, number][] = [[466, 795], [467, 760], [468, 484], [469, 690], [471, 700], [472, 490], [473, 650], [474, 640], [476, 488], [478, 640], [479, 484]];
  for (let x = 480; x <= 716; x += 1.7) {
    const top = envAt(x);
    const r = rng();
    let depth: number;
    if (x < 516) depth = r < 0.3 ? 25 + rng() * 65 : rng() * 10;
    else if (x < 605) depth = r < 0.32 ? 14 + rng() * 42 : rng() * 8;
    else depth = r < 0.5 ? 18 + rng() * 16 : 2 + rng() * 14;
    p.push([x, top + rng() * 5], [x, top + depth]);
  }
  return p;
})();
const descent = [[716, 585], [722, 600], [723, 615], [725, 635], [727, 650], [728, 668], [731, 682], [734, 698], [737, 703], [741, 712], [744, 720], [746, 730], [751, 732], [755, 730], [758, 735], [760, 731], [764, 733], [768, 733], [770, 740], [772, 733], [775, 732], [780, 731], [785, 734], [790, 733]];
const yellow = (a: number[][]) => a.map(([x, yy]) => `${x - 465},${yy - 392}`).join(" ");

const xLabels = ["0", "6400", "12800", "19200", "25600", "32000", "38400", "44800", "51200", "57600", "64000", "70400", "76800", "83200", "89600"];
const yLabels = ["909000", "808000", "707000", "606000", "505000", "404000", "303000", "202000", "101000"];

const Panels = () => (
  <ResLeft>
    <Panel>
      <PanelHead>
        <PanelName>Процессы</PanelName>
        <Meter $c="#00ff00" /><MeterText $w={93}>55% - испол...</MeterText>
        <Meter $c="#7ab4ff" /><MeterText>106% макси...</MeterText>
        <Collapse><ChevBold /></Collapse>
      </PanelHead>
      <PanelTable>
        <TableMain>
          <HeadRow>
            <HeadCell><Box12 />Образ</HeadCell><HeadCell>ИД п...</HeadCell><HeadCell>Опис...</HeadCell><HeadCell>Сост...</HeadCell><HeadCell $r>Потоки</HeadCell>
          </HeadRow>
          <Rows $h={143}>
            <TableGrid>
              {procs.map((r) => (
                <React.Fragment key={r[1]}>
                  <NameCell $blue={!!r[5]}><Box12 />{r[0]}</NameCell>
                  <BodyCell $blue={!!r[5]}>{r[1]}</BodyCell><BodyCell $blue={!!r[5]}>{r[2]}</BodyCell><BodyCell $blue={!!r[5]}>{r[3]}</BodyCell><BodyCell $blue={!!r[5]} $r>{r[4]}</BodyCell>
                </React.Fragment>
              ))}
            </TableGrid>
          </Rows>
          <HBar><Arrow><Chev dir="l" /></Arrow><ThumbH /></HBar>
        </TableMain>
        <VBar><Arrow><Chev dir="u" /></Arrow><ThumbV $h={17} /><Spacer /><Arrow><Chev dir="d" /></Arrow><Arrow><Chev dir="r" /></Arrow></VBar>
      </PanelTable>
    </Panel>
    <Panel>
      <PanelHead>
        <PanelName>Службы</PanelName>
        <Meter $c="#006400" /><MeterText>0% - использование ЦП</MeterText>
        <Collapse><ChevBold /></Collapse>
      </PanelHead>
      <PanelTable>
        <TableMain>
          <HeadRow>
            <HeadCell>Имя</HeadCell><HeadCell>ИД п...</HeadCell><HeadCell>Опис...</HeadCell><HeadCell>Сост...</HeadCell><HeadCell>Группа</HeadCell>
          </HeadRow>
          <Rows $h={143}>
            <TableGrid>
              {["Оск...", "", "Local...", "RPCSS", "", "Local...", "utcsvc", "netsv", "Dcc"].map((g, i) => (
                <React.Fragment key={i}>
                  <NameCell>{i === 0 ? "BrokerInfrastructure" : ""}</NameCell><BodyCell>{i === 0 ? "900" : ""}</BodyCell><BodyCell>{i === 0 ? "Служ..." : ""}</BodyCell><BodyCell>{i === 0 ? "Вып..." : ""}</BodyCell><BodyCell>{g}</BodyCell>
                </React.Fragment>
              ))}
            </TableGrid>
          </Rows>
          <HBar />
        </TableMain>
        <VBar><Arrow><Chev dir="u" /></Arrow><ThumbV $h={17} /><Spacer /><Arrow><Chev dir="d" /></Arrow><Arrow><Chev dir="r" /></Arrow></VBar>
      </PanelTable>
    </Panel>
    <Panel>
      <PanelHead><HeadAction><UpBlue /></HeadAction><Collapse><ChevBold /></Collapse></PanelHead>
      <LowerGrid><LowerCol><div>мя ...</div><div>или</div></LowerCol><FaintLines /></LowerGrid>
    </Panel>
    <Panel>
      <PanelHead><Collapse><ChevBold /></Collapse></PanelHead>
      <LowerFour><div>Полн...</div><DriveLetter>C:</DriveLetter></LowerFour>
    </Panel>
  </ResLeft>
);

export default function App() {
  return (
    <Desktop>
      <Global />
      {/* Task manager */}
      <TmWin $x={0} $y={0} $w={1920} $h={1040}>
        <TmTitle><TmIcon />Диспетчер задач<TmClose><XIcon s={13} /></TmClose></TmTitle>
        <TmMenu><span>Файл</span><span>Параметры</span><span>Вид</span></TmMenu>
        <TmTabs><TmTab>Процессы</TmTab></TmTabs>
        <TmBody>
          <TmLeft>
            <Thumb $sel><ThumbBox $c="#117dbb"><CpuThumbLine /></ThumbBox></Thumb>
            <Thumb><ThumbBox $c="#8b12ae" /></Thumb>
            <Thumb><ThumbBox $c="#4da60c" /></Thumb>
            <Thumb><ThumbBox $c="#4da60c" /></Thumb>
            <Thumb><ThumbBox $c="#b8b8b8" /></Thumb>
            <Thumb><ThumbBox $c="#a74f01" /></Thumb>
            <Thumb><ThumbBox $c="#b8b8b8" /></Thumb>
            <Thumb $gap={10}><ThumbBox $c="#117dbb" $tall /></Thumb>
            <Thumb><ThumbBox $c="#117dbb" $tall /><ThumbPct>0%</ThumbPct></Thumb>
          </TmLeft>
          <TmRight>
            <TmHead><TmHeadCpu>Intel(R) Core(TM) i7-4700HQ CPU @ 2.40GHz</TmHeadCpu><div>100%</div></TmHead>
            <BigChart />
            <Caption>60 секунд</Caption>
            <StatsRow>
              <StatsLeft>
                <StatLine>
                  <Stat $w={106}><StatLabel>Использование</StatLabel><StatValue>56%</StatValue></Stat>
                  <Stat $w={120}><StatLabel>Скорость</StatLabel><StatValue>2,54 ГГц</StatValue></Stat>
                </StatLine>
                <StatLine>
                  <Stat $w={77}><StatLabel>Процессы</StatLabel><StatValue>197</StatValue></Stat>
                  <Stat $w={64}><StatLabel>Потоки</StatLabel><StatValue>2292</StatValue></Stat>
                  <Stat $w={87}><StatLabel>Дескрипторы</StatLabel><StatValue>84099</StatValue></Stat>
                </StatLine>
                <StatLine>
                  <Stat $w={180}><StatLabel>Время работы</StatLabel><StatValue>6:18:19:50</StatValue></Stat>
                </StatLine>
              </StatsLeft>
              <CacheBlock>
                <CacheRow><CacheKey>Кэш L1:</CacheKey><CacheVal>256 КБ</CacheVal></CacheRow>
                <CacheRow><CacheKey>Кэш L2:</CacheKey><CacheVal>1,0 МБ</CacheVal></CacheRow>
                <CacheRow><CacheKey>Кэш L3:</CacheKey><CacheVal>6,0 МБ</CacheVal></CacheRow>
              </CacheBlock>
            </StatsRow>
          </TmRight>
        </TmBody>
        <TmFoot><LessI /><FootLess>Меньше</FootLess><FootSep /><CompassIcon /><FootLink>Открыть монитор ресурсов</FootLink></TmFoot>
      </TmWin>

      {/* NUMA benchmarks */}
      <NumaWin $x={31} $y={30} $w={744} $h={583}>
        <WinTitle><NumaIcon />NUMA CPU&amp;RAM Benchmarks for Win64<WinX><XIcon /></WinX></WinTitle>
        <InfoBox $h={158} $mt={9}>
          {infoLines.map((l, i) => (
            <InfoLine key={i}>{l.map(([t, w], j) => <Cell key={j} $w={w}>{t}</Cell>)}</InfoLine>
          ))}
        </InfoBox>
        <OptionsBox $h={318} $mt={10}>
          <OptLeft>
            {radios.map(([t, on, off]) => (
              <OptRow key={t} $off={off}><Radio $on={on} $off={off} />{t}</OptRow>
            ))}
          </OptLeft>
          <OptRight>
            <OptRow $h={22}><Check><Tick /></Check>Use parallel operations</OptRow>
            <OptRow $h={22}><Check />Use hyper-threading</OptRow>
            <OptRow $h={22} $off><Check $off />Use large pages</OptRow>
            <OptRow $mt={16} $off><Radio $on $off />No NUMA aware</OptRow>
            <OptRow $off><Radio $off />Force NUMA optimal (local domains)</OptRow>
            <OptRow $off><Radio $off />Force NUMA bad (remote domains)</OptRow>
            <OptRow $mt={14}><Radio $on />L1 cache</OptRow>
            <OptRow><Radio />L2 cache</OptRow>
            <OptRow><Radio />L3 cache</OptRow>
            <OptRow><Radio />RAM</OptRow>
            <OptRow><Radio />Custom block</OptRow>
            <OptRow $mt={18}><Check><Tick /></Check>Careful</OptRow>
          </OptRight>
        </OptionsBox>
        <ButtonsBox $h={44} $mt={9}>
          <OldButton $w={70}>About</OldButton>
          <OldButton $w={110}>Vector brief</OldButton>
          <OldButton $w={110}>Run simple</OldButton>
          <OldButton $w={110}>Run drawing</OldButton>
        </ButtonsBox>
      </NumaWin>

      {/* Resource monitor */}
      <ResWin $x={921} $y={0} $w={971} $h={1032}>
        <ResTitle><CompassIcon />Монитор ресурсов
          <Ctrls>
            <svg width="11" height="2"><rect width="11" height="1" fill="#999" /></svg>
            <svg width="10" height="10"><rect x=".5" y=".5" width="9" height="9" stroke="#999" fill="none" /></svg>
            <XIcon c="#888" s={11} />
          </Ctrls>
        </ResTitle>
        <ResMenu><span>Файл</span><span>Монитор</span><span>Справка</span></ResMenu>
        <ResTabs>
          <ResTab $w={47}>Обзор</ResTab>
          <ResTab $w={51} $on>ЦП</ResTab>
          <ResTab $w={52}>Память</ResTab>
          <ResTab $w={49}>Диск</ResTab>
          <ResTab $w={47}>Сеть</ResTab>
        </ResTabs>
        <ResBody>
          <Panels />
          <MidBar><Arrow><Chev dir="u" /></Arrow><ThumbTall /><Arrow><Chev dir="d" /></Arrow></MidBar>
          <Gutter />
          <ResRight>
            <Tail><TailText>0%</TailText><TailTick /></Tail>
            {[0, 1, 2, 3, 4, 5, 6].map((i) => (
              <CpuBlock key={i}>
                <CpuHead><span>ЦП {i}</span><span>100%</span></CpuHead>
                <Bracket />
                <CpuChart i={i} />
                <CpuFoot>0%</CpuFoot>
              </CpuBlock>
            ))}
          </ResRight>
          <VBar>
            <Arrow><Chev dir="u" /></Arrow>
            <ThumbV $h={615} $mt={194} />
            <Spacer />
            <Arrow><Chev dir="d" /></Arrow>
          </VBar>
        </ResBody>
      </ResWin>

      <Headline>{"Hyper-Threading not used.  Load CPUs 0,2,4,6"}</Headline>

      {/* Speed chart */}
      <SpeedWin $x={462} $y={366} $w={756} $h={557}>
        <WinTitleDark><NumaIcon />Speed = F (Block Size)<WinX><XIcon c="#222" /></WinX></WinTitleDark>
        <Canvas>
          <Layer width={751} height={482} viewBox="0 0 751 482" shapeRendering="crispEdges">
            {Array.from({ length: 15 }, (_, k) => <rect key={k} x={50 * (k + 1)} y={0} width="1" height="482" fill="#0a6e0a" />)}
            {Array.from({ length: 10 }, (_, k) => <rect key={k} x={0} y={50 + 48 * k} width="751" height="1" fill="#0a6e0a" />)}
          </Layer>
          <AxisY>
            <AxisMbps>MBPS</AxisMbps>
            {yLabels.map((l) => <AxisYRow key={l}>{l}</AxisYRow>)}
          </AxisY>
          <AxisX>{xLabels.map((l) => <AxisXCell key={l}>{l}</AxisXCell>)}</AxisX>
          <Bytes>Bytes</Bytes>
          <StatsText $x={409} $y={7}>
            <StatsLine>{"TSC clock (MHz)  = 2395"}</StatsLine>
            <StatsLine>Minimum (CPI) = 0.375</StatsLine>
            <StatsLine>Maximum (CPI) = 1.814</StatsLine>
            <StatsLine>Average (CPI) = 0.569</StatsLine>
          </StatsText>
          <StatsText $x={610} $y={25}>
            <StatsLine>MBPS = 817823</StatsLine>
            <StatsLine>MBPS = 169064</StatsLine>
            <StatsLine>MBPS = 538987</StatsLine>
          </StatsText>
          <Hex>
            {hexRows.map((r, i) => (
              <HexRow key={i}>{r.split(" ").map((c, j) => <HexCell key={j}>{c}</HexCell>)}</HexRow>
            ))}
          </Hex>
          <Layer width={751} height={482} viewBox="0 0 751 482">
            <polyline points={yellow(yellowPts)} fill="none" stroke="#ffff00" strokeWidth="1" />
            <polyline points={yellow(descent)} fill="none" stroke="#ffff00" strokeWidth="1.3" />
          </Layer>
        </Canvas>
        <SpeedFoot>
          <SpeedInfo>
            <SpeedLine>Read AVX-256 (VMOVAPD)</SpeedLine>
            <SpeedLine><Cell $w={108}>L1 cache</Cell><Cell $w={97}>Threads=4</Cell><Cell $w={137}>Repeats=2000000</Cell><Cell>4K pages</Cell></SpeedLine>
          </SpeedInfo>
          <SpeedBtns>
            <OldButton $w={80} $focus>Resize</OldButton>
            <OldButton $w={80}>Cancel</OldButton>
          </SpeedBtns>
        </SpeedFoot>
      </SpeedWin>

      <RedBox $x={390} $y={249} $w={212} $h={52} />
      <RedBox $x={213} $y={818} $w={220} $h={55} />
      <RedBox $x={573} $y={900} $w={99} $h={22} />

      {/* Taskbar */}
      <Taskbar>
        <TbIcons>
          <TbSlot $w={47}><WinLogo /></TbSlot>
          <TbSlot $w={49}><SearchI /></TbSlot>
          <TbSlot $w={49}><TaskV /></TbSlot>
          <TbSlot $w={50} $run><EdgeI /></TbSlot>
          <TbSlot $w={49} $run><FolderI /></TbSlot>
          <TbSlot $w={49}><StoreI /></TbSlot>
          <TbSlot $w={49}><WheelI /></TbSlot>
          <TbSlot $w={49}><DiamondI /></TbSlot>
          <TbSlot $w={49}><MapI /></TbSlot>
          <TbSlot $w={49}><NetI /></TbSlot>
          <TbSlot $w={50}><MailI /></TbSlot>
          <TbSlot $w={49} $run><OperaI /></TbSlot>
          <TbSlot $w={49} $run><SkypeBg><SkypeText>S</SkypeText></SkypeBg></TbSlot>
          <TbSlot $w={49} $on $run><NumaIcon s={24} /></TbSlot>
          <TbSlot $w={49} $run><PerfI /></TbSlot>
          <TbSlot $w={49} $run><ResI /></TbSlot>
        </TbIcons>
        <Tray>
          <TrayIcon $w={58}><PeopleI /></TrayIcon>
          <TrayIcon $w={14}><CaretI /></TrayIcon>
          <TrayIcon $w={34}><BattI /></TrayIcon>
          <TrayIcon $w={16}><WifiI /></TrayIcon>
          <TrayIcon $w={28}><VolI /></TrayIcon>
          <TrayIcon $w={30}><KbdI /></TrayIcon>
          <TrayLang>ENG</TrayLang>
          <Clock>11:44<br />21.09.2018</Clock>
          <TrayIcon $w={38}><NotifI /></TrayIcon>
          <DeskEdge />
        </Tray>
      </Taskbar>
    </Desktop>
  );
}
